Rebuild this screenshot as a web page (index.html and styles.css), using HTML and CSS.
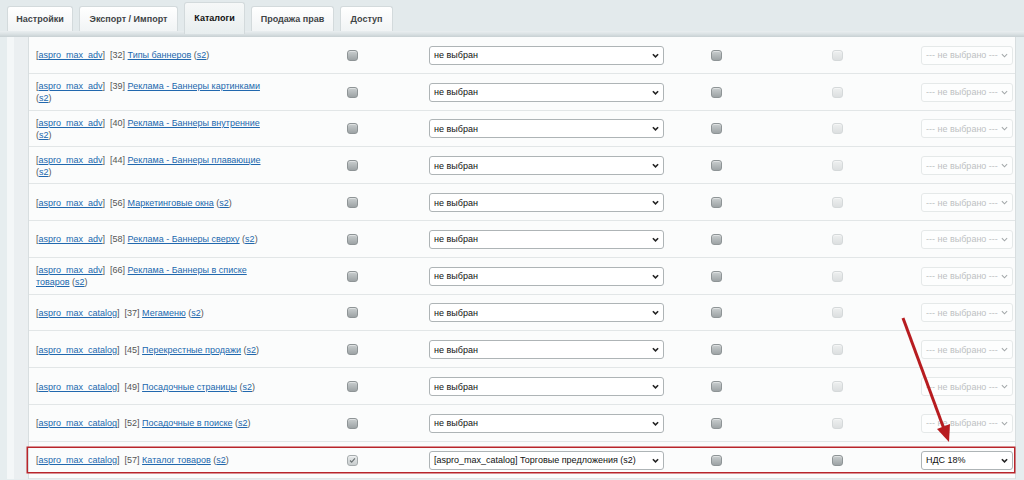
FILE: index.html
```html
<!DOCTYPE html>
<html lang="ru">
  <head>
    <meta charset="UTF-8" />
    <title>Каталоги</title>
    <link rel="stylesheet" href="styles.css">
  </head>
  <body>
    <div class="tabs">
      <a class="tab tab-settings">Настройки</a>
      <a class="tab tab-export">Экспорт / Импорт</a>
      <a class="tab tab-catalogs active">Каталоги</a>
      <a class="tab tab-rights">Продажа прав</a>
      <a class="tab tab-access">Доступ</a>
    </div>
    <div class="band"></div>
    <div class="content">
      <div class="grid">
        <div class="row">
          <div class="name">[<a href="#">aspro_max_adv</a>]&nbsp; [32] <a href="#">Типы баннеров</a> (<a href="#">s2</a>)</div>
          <div class="cell"><span class="cb"></span></div>
          <div class="sel"><select><option>не выбран</option></select><svg class="chev" viewBox="0 0 8 5"><path d="M1 1l3 3 3-3"/></svg></div>
          <div class="cell"><span class="cb"></span></div>
          <div class="cell"><span class="cb off"></span></div>
          <div class="sel small off"><select disabled><option>--- не выбрано ---</option></select><svg class="chev" viewBox="0 0 8 5"><path d="M1 1l3 3 3-3"/></svg></div>
        </div>
        <div class="row">
          <div class="name">[<a href="#">aspro_max_adv</a>]&nbsp; [39] <a href="#">Реклама - Баннеры картинками</a> (<a href="#">s2</a>)</div>
          <div class="cell"><span class="cb"></span></div>
          <div class="sel"><select><option>не выбран</option></select><svg class="chev" viewBox="0 0 8 5"><path d="M1 1l3 3 3-3"/></svg></div>
          <div class="cell"><span class="cb"></span></div>
          <div class="cell"><span class="cb off"></span></div>
          <div class="sel small off"><select disabled><option>--- не выбрано ---</option></select><svg class="chev" viewBox="0 0 8 5"><path d="M1 1l3 3 3-3"/></svg></div>
        </div>
        <div class="row">
          <div class="name">[<a href="#">aspro_max_adv</a>]&nbsp; [40] <a href="#">Реклама - Баннеры внутренние</a> (<a href="#">s2</a>)</div>
          <div class="cell"><span class="cb"></span></div>
          <div class="sel"><select><option>не выбран</option></select><svg class="chev" viewBox="0 0 8 5"><path d="M1 1l3 3 3-3"/></svg></div>
          <div class="cell"><span class="cb"></span></div>
          <div class="cell"><span class="cb off"></span></div>
          <div class="sel small off"><select disabled><option>--- не выбрано ---</option></select><svg class="chev" viewBox="0 0 8 5"><path d="M1 1l3 3 3-3"/></svg></div>
        </div>
        <div class="row">
          <div class="name">[<a href="#">aspro_max_adv</a>]&nbsp; [44] <a href="#">Реклама - Баннеры плавающие</a> (<a href="#">s2</a>)</div>
          <div class="cell"><span class="cb"></span></div>
          <div class="sel"><select><option>не выбран</option></select><svg class="chev" viewBox="0 0 8 5"><path d="M1 1l3 3 3-3"/></svg></div>
          <div class="cell"><span class="cb"></span></div>
          <div class="cell"><span class="cb off"></span></div>
          <div class="sel small off"><select disabled><option>--- не выбрано ---</option></select><svg class="chev" viewBox="0 0 8 5"><path d="M1 1l3 3 3-3"/></svg></div>
        </div>
        <div class="row">
          <div class="name">[<a href="#">aspro_max_adv</a>]&nbsp; [56] <a href="#">Маркетинговые окна</a> (<a href="#">s2</a>)</div>
          <div class="cell"><span class="cb"></span></div>
          <div class="sel"><select><option>не выбран</option></select><svg class="chev" viewBox="0 0 8 5"><path d="M1 1l3 3 3-3"/></svg></div>
          <div class="cell"><span class="cb"></span></div>
          <div class="cell"><span class="cb off"></span></div>
          <div class="sel small off"><select disabled><option>--- не выбрано ---</option></select><svg class="chev" viewBox="0 0 8 5"><path d="M1 1l3 3 3-3"/></svg></div>
        </div>
        <div class="row">
          <div class="name">[<a href="#">aspro_max_adv</a>]&nbsp; [58] <a href="#">Реклама - Баннеры сверху</a> (<a href="#">s2</a>)</div>
          <div class="cell"><span class="cb"></span></div>
          <div class="sel"><select><option>не выбран</option></select><svg class="chev" viewBox="0 0 8 5"><path d="M1 1l3 3 3-3"/></svg></div>
          <div class="cell"><span class="cb"></span></div>
          <div class="cell"><span class="cb off"></span></div>
          <div class="sel small off"><select disabled><option>--- не выбрано ---</option></select><svg class="chev" viewBox="0 0 8 5"><path d="M1 1l3 3 3-3"/></svg></div>
        </div>
        <div class="row">
          <div class="name">[<a href="#">aspro_max_adv</a>]&nbsp; [66] <a href="#">Реклама - Баннеры в списке товаров</a> (<a href="#">s2</a>)</div>
          <div class="cell"><span class="cb"></span></div>
          <div class="sel"><select><option>не выбран</option></select><svg class="chev" viewBox="0 0 8 5"><path d="M1 1l3 3 3-3"/></svg></div>
          <div class="cell"><span class="cb"></span></div>
          <div class="cell"><span class="cb off"></span></div>
          <div class="sel small off"><select disabled><option>--- не выбрано ---</option></select><svg class="chev" viewBox="0 0 8 5"><path d="M1 1l3 3 3-3"/></svg></div>
        </div>
        <div class="row">
          <div class="name">[<a href="#">aspro_max_catalog</a>]&nbsp; [37] <a href="#">Мегаменю</a> (<a href="#">s2</a>)</div>
          <div class="cell"><span class="cb"></span></div>
          <div class="sel"><select><option>не выбран</option></select><svg class="chev" viewBox="0 0 8 5"><path d="M1 1l3 3 3-3"/></svg></div>
          <div class="cell"><span class="cb"></span></div>
          <div class="cell"><span class="cb off"></span></div>
          <div class="sel small off"><select disabled><option>--- не выбрано ---</option></select><svg class="chev" viewBox="0 0 8 5"><path d="M1 1l3 3 3-3"/></svg></div>
        </div>
        <div class="row">
          <div class="name">[<a href="#">aspro_max_catalog</a>]&nbsp; [45] <a href="#">Перекрестные продажи</a> (<a href="#">s2</a>)</div>
          <div class="cell"><span class="cb"></span></div>
          <div class="sel"><select><option>не выбран</option></select><svg class="chev" viewBox="0 0 8 5"><path d="M1 1l3 3 3-3"/></svg></div>
          <div class="cell"><span class="cb"></span></div>
          <div class="cell"><span class="cb off"></span></div>
          <div class="sel small off"><select disabled><option>--- не выбрано ---</option></select><svg class="chev" viewBox="0 0 8 5"><path d="M1 1l3 3 3-3"/></svg></div>
        </div>
        <div class="row">
          <div class="name">[<a href="#">aspro_max_catalog</a>]&nbsp; [49] <a href="#">Посадочные страницы</a> (<a href="#">s2</a>)</div>
          <div class="cell"><span class="cb"></span></div>
          <div class="sel"><select><option>не выбран</option></select><svg class="chev" viewBox="0 0 8 5"><path d="M1 1l3 3 3-3"/></svg></div>
          <div class="cell"><span class="cb"></span></div>
          <div class="cell"><span class="cb off"></span></div>
          <div class="sel small off"><select disabled><option>--- не выбрано ---</option></select><svg class="chev" viewBox="0 0 8 5"><path d="M1 1l3 3 3-3"/></svg></div>
        </div>
        <div class="row">
          <div class="name">[<a href="#">aspro_max_catalog</a>]&nbsp; [52] <a href="#">Посадочные в поиске</a> (<a href="#">s2</a>)</div>
          <div class="cell"><span class="cb"></span></div>
          <div class="sel"><select><option>не выбран</option></select><svg class="chev" viewBox="0 0 8 5"><path d="M1 1l3 3 3-3"/></svg></div>
          <div class="cell"><span class="cb"></span></div>
          <div class="cell"><span class="cb off"></span></div>
          <div class="sel small off"><select disabled><option>--- не выбрано ---</option></select><svg class="chev" viewBox="0 0 8 5"><path d="M1 1l3 3 3-3"/></svg></div>
        </div>
        <div class="row marked">
          <div class="name">[<a href="#">aspro_max_catalog</a>]&nbsp; [57] <a href="#">Каталог товаров</a> (<a href="#">s2</a>)</div>
          <div class="cell"><span class="cb checked"><svg viewBox="0 0 11 11"><path d="M2.5 5.5l2 2 4-4.5"/></svg></span></div>
          <div class="sel"><select><option>[aspro_max_catalog] Торговые предложения (s2)</option></select><svg class="chev" viewBox="0 0 8 5"><path d="M1 1l3 3 3-3"/></svg></div>
          <div class="cell"><span class="cb"></span></div>
          <div class="cell"><span class="cb"></span></div>
          <div class="sel small"><select><option>НДС 18%</option></select><svg class="chev" viewBox="0 0 8 5"><path d="M1 1l3 3 3-3"/></svg></div>
        </div>
      </div>
    </div>

    <!-- annotation arrow -->
    <svg class="arrow" width="1024" height="480" viewBox="0 0 1024 480">
      <line x1="903" y1="318" x2="944" y2="429" />
      <polygon points="950,424 937,429 949,442" />
    </svg>
  </body>
</html>
```

FILE: styles.css
```css
html, body {
  overflow: hidden;
}
body {
  margin: 0;
  font-family: "Liberation Sans", Arial, sans-serif;
  font-size: 9px;
  color: #555;
  background-color: #e6edef;
}
a {
  color: #2168ae;
}

/* tabs */
.tabs {
  display: flex;
  align-items: flex-end;
  gap: 6px;
  height: 31px;
  padding-left: 7px;
  background-color: #e3eaec;
}
.tab {
  box-sizing: border-box;
  height: 25px;
  line-height: 24px;
  text-align: center;
  font-weight: bold;
  color: #3f4446;
  text-decoration: none;
  background: linear-gradient(#ffffff, #f1f4f5);
  border: 1px solid #d3dadc;
  border-bottom: none;
  border-radius: 3px 3px 0 0;
}
.tab-settings { width: 66px; }
.tab-export { width: 99px; }
.tab-catalogs { width: 61px; }
.tab-rights { width: 83px; }
.tab-access { width: 53px; }
.tab.active {
  height: 32px;
  line-height: 30px;
  margin-bottom: -3px;
  color: #111;
  background: linear-gradient(#f6f8f8, #e8eeef);
  position: relative;
}
.band {
  height: 6px;
  background: linear-gradient(#e9eef0, #dbe2e4 50%, #c7d0d3);
}

/* table */
.content {
  margin-right: 8px;
  margin-left: 7px;
  border-left: 7px solid #f4f7f8;
  padding-left: 14px;
  background-color: #ebeff1;
}
.grid {
  background-color: #fbfcfc;
  border-left: 1px solid #d8dee0;
  border-right: 1px solid #d8dee0;
}
.row {
  display: grid;
  grid-template-columns: 240px 153px 235px 104px 138px 107px;
  align-items: center;
  height: 35.8px;
  padding-top: 1px;
  padding-left: 7px;
  box-sizing: border-box;
  min-height: 36.8px;
  border-bottom: 1px solid #e2e6e7;
  position: relative;
}
.name {
  line-height: 12px;
}
.cell {
  display: flex;
  justify-content: center;
}

/* checkboxes */
.cb {
  display: block;
  width: 9px;
  height: 9px;
  border: 1px solid #8e9496;
  border-radius: 3px;
  background: linear-gradient(#c9cecf, #9da3a5);
  box-shadow: inset 0 1px 0 rgba(255, 255, 255, 0.4);
}
.cb.off {
  border-color: #d5d9da;
  background: linear-gradient(#eef0f0, #dcdfe0);
}
.cb.checked {
  border-color: #a5abad;
  background: linear-gradient(#e6e9ea, #c9cecf);
}
.cb svg {
  display: block;
  width: 9px;
  height: 9px;
  fill: none;
  stroke: #6b7274;
  stroke-width: 1.4;
}

/* selects */
.sel {
  position: relative;
}
.sel select {
  display: block;
  width: 100%;
  height: 19px;
  padding: 0 14px 0 4px;
  font-family: "Liberation Sans", Arial, sans-serif;
  font-size: 9px;
  color: #111;
  background-color: #fff;
  border: 1px solid #aeb4b6;
  border-radius: 3px;
  appearance: none;
  -webkit-appearance: none;
}
.sel.small {
  justify-self: end;
  width: 92px;
}
.sel.off select {
  color: #a3a8aa;
  border-color: #dde1e2;
}
.chev {
  position: absolute;
  right: 5px;
  top: 7px;
  width: 7px;
  height: 5px;
  fill: none;
  stroke: #222;
  stroke-width: 1.8;
}
.sel.off .chev {
  stroke: #a3a8aa;
  stroke-width: 1.2;
}

/* highlighted row */
.marked::after {
  content: "";
  position: absolute;
  left: -2px;
  right: 0;
  top: 5px;
  bottom: 5px;
  border: 1px solid #b8252b;
  box-shadow: 0 0 0 0.5px #b8252b;
  pointer-events: none;
}

.arrow {
  position: absolute;
  left: 0;
  top: 0;
  pointer-events: none;
}
.arrow line {
  stroke: #b71c20;
  stroke-width: 3;
}
.arrow polygon {
  fill: #b71c20;
}
```
